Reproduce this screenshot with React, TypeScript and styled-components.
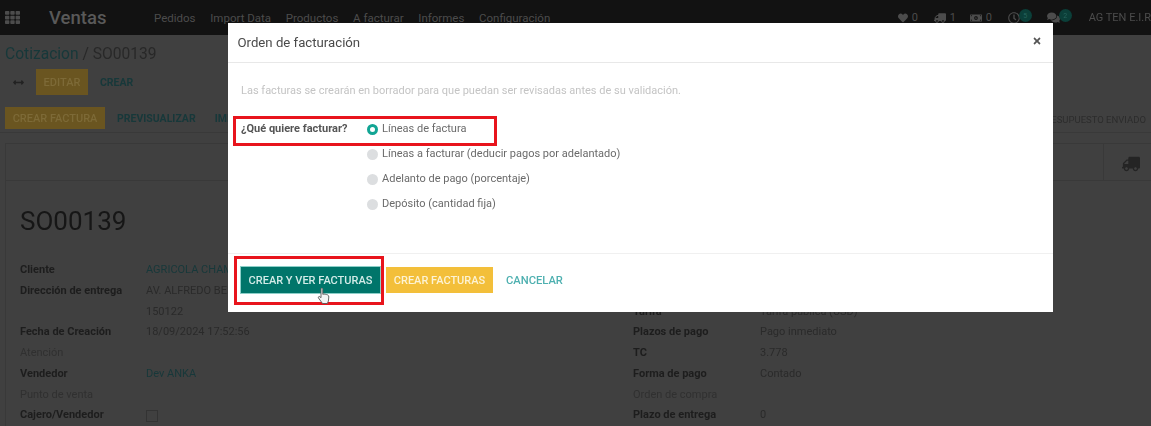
import React from "react";
import styled, { createGlobalStyle } from "styled-components";
import { FaTh, FaTruck, FaHeart, FaMoneyBillAlt, FaRegClock, FaComments, FaTimes, FaArrowsAltH } from "react-icons/fa";

const Global = createGlobalStyle`
  html, body { margin: 0; padding: 0; background: #404040; }
  body { font-family: Roboto, "Liberation Sans", sans-serif; }
`;

const Page = styled.div`
  position: relative;
  width: 1151px;
  height: 426px;
  overflow: hidden;
  background: #404040;
  color: #1f1f1f;
  font-size: 11px;
`;
const Backdrop = styled.div`
  display: flex;
  flex-direction: column;
  height: 100%;
  filter: blur(0.5px);
`;
const Navbar = styled.header`
  flex: none;
  height: 35px;
  background: #121212;
  display: flex;
  align-items: center;
  padding-left: 5px;
  color: #4c4c4c;
`;
const Brand = styled.span`
  margin-left: 29px;
  width: 105px;
  font-size: 18.5px;
  font-weight: 500;
  color: #595959;
`;
const NavMenu = styled.nav`
  display: flex;
  gap: 14.7px;
  font-size: 11.5px;
`;
const Systray = styled.div`
  margin-left: auto;
  display: flex;
  align-items: center;
  font-size: 11px;
`;
const TrayItem = styled.span<{ $w: number }>`
  display: flex;
  align-items: center;
  gap: 4px;
  width: ${(p) => p.$w}px;
  white-space: nowrap;
`;
const Dot = styled.span`
  width: 13px;
  height: 13px;
  margin-left: -5px;
  margin-top: -4px;
  border-radius: 50%;
  background: #0b3f39;
  color: #27635c;
  font-size: 7px;
  display: flex;
  align-items: center;
  justify-content: center;
`;
const Breadcrumb = styled.div`
  padding: 9px 0 0 5px;
  height: 26px;
  font-size: 15.6px;
  line-height: 21px;
  color: #282828;
  & > b { font-weight: 400; color: #17383a; }
`;
const ActionRow = styled.div`
  display: flex;
  align-items: center;
  height: 26px;
  color: #222;
`;
const Arrow = styled.span`
  width: 36px;
  padding-left: 13px;
  box-sizing: border-box;
  display: flex;
`;
const YellowBtn = styled.span<{ $w: number; $h: number }>`
  width: ${(p) => p.$w}px;
  height: ${(p) => p.$h}px;
  background: #6a5520;
  color: #7d6a37;
  font-size: 11px;
  font-weight: 500;
  display: flex;
  align-items: center;
  justify-content: center;
  flex: none;
`;
const GhostBtn = styled.span<{ $ml: number; $mt?: number }>`
  margin-left: ${(p) => p.$ml}px;
  margin-top: ${(p) => p.$mt ?? 0}px;
  color: #17383a;
  font-size: 10.5px;
  font-weight: 700;
  white-space: nowrap;
`;
const StatusBar = styled.div`
  flex: none;
  margin-top: 12px;
  height: 25px;
  padding-left: 5px;
  display: flex;
  align-items: flex-start;
  border-bottom: 1px solid #393939;
`;
const StageName = styled.span`
  margin-left: auto;
  margin-right: 5px;
  margin-top: 7px;
  color: #2c2c2c;
  font-size: 9.5px;
  white-space: nowrap;
`;
const Sheet = styled.section`
  margin: 10px 0 0 5px;
  flex: 1;
  border-top: 1px solid #393939;
  border-left: 1px solid #393939;
  display: flex;
  flex-direction: column;
`;
const ButtonBox = styled.div`
  flex: none;
  height: 36px;
  display: flex;
  justify-content: flex-end;
  border-bottom: 1px solid #393939;
`;
const ButtonCell = styled.div`
  width: 48px;
  box-sizing: border-box;
  padding: 3px 0 0 6px;
  border-left: 1px solid #393939;
  display: flex;
  align-items: center;
  justify-content: center;
  color: #242424;
`;
const Title = styled.h1`
  margin: 24px 0 0 14px;
  height: 38px;
  font-size: 26px;
  line-height: 32px;
  font-weight: 400;
  color: #161616;
`;
const Columns = styled.div`
  display: flex;
  margin: 17px 0 0 14px;
`;
const Column = styled.div<{ $w: number }>`
  width: ${(p) => p.$w}px;
  display: flex;
  flex-direction: column;
  flex: none;
`;
const Field = styled.div`
  height: 20.75px;
  line-height: 20.75px;
  display: flex;
  white-space: nowrap;
`;
const Label = styled.span<{ $w: number; $muted?: boolean }>`
  width: ${(p) => p.$w}px;
  flex: none;
  font-weight: ${(p) => (p.$muted ? 400 : 700)};
  color: ${(p) => (p.$muted ? "#303030" : "#1d1d1d")};
`;
const Value = styled.span<{ $link?: boolean }>`
  color: ${(p) => (p.$link ? "#17383a" : "#2a2a2a")};
`;
const Check = styled.span`
  width: 10px;
  height: 10px;
  margin-top: 5px;
  border: 1px solid #333;
`;

const Modal = styled.div`
  position: absolute;
  left: 228px;
  top: 23px;
  width: 825px;
  height: 289px;
  background: #fff;
  display: flex;
  flex-direction: column;
  filter: blur(0.3px);
`;
const ModalHeader = styled.div`
  flex: none;
  height: 40px;
  box-sizing: border-box;
  border-bottom: 1px solid #e8e8e8;
  padding: 0 11px 0 9.5px;
  display: flex;
  align-items: center;
  justify-content: space-between;
`;
const ModalTitle = styled.span`
  font-size: 13.2px;
  color: #4a4a4a;
`;
const Close = styled.span`
  display: flex;
  color: #555;
  margin-top: -3px;
`;
const ModalBody = styled.div`
  flex: 1;
  padding: 21px 13px 0;
  font-size: 11px;
  color: #6a6a6a;
`;
const Note = styled.p`
  margin: 0 0 24.4px;
  line-height: 14px;
  color: #c4c4c4;
`;
const FormRow = styled.div`
  display: flex;
`;
const FormLabel = styled.span`
  width: 126px;
  flex: none;
  font-weight: 700;
  color: #555;
  line-height: 13px;
`;
const RadioGroup = styled.div`
  display: flex;
  flex-direction: column;
`;
const RadioRow = styled.label`
  height: 25px;
  display: flex;
  align-items: flex-start;
  gap: 4px;
  line-height: 14px;
`;
const Radio = styled.span<{ $on?: boolean }>`
  width: 11px;
  height: 11px;
  margin-top: 2px;
  border-radius: 50%;
  box-sizing: border-box;
  background: ${(p) => (p.$on ? "#fff" : "#dcdee0")};
  border: ${(p) => (p.$on ? "3px solid #12a594" : "none")};
`;
const ModalFooter = styled.div`
  flex: none;
  height: 59px;
  box-sizing: border-box;
  border-top: 1px solid #f0f0f0;
  padding: 13px 0 0 13px;
  display: flex;
  align-items: flex-start;
`;
const PrimaryBtn = styled.span`
  width: 139px;
  height: 26px;
  background: #00756a;
  color: #d3ece8;
  box-shadow: 0 0 0 1px #8ccfc8;
  font-size: 11px;
  font-weight: 500;
  display: flex;
  align-items: center;
  justify-content: center;
`;
const SecondaryBtn = styled.span`
  margin-left: 6px;
  width: 107px;
  height: 26px;
  background: #f3bf3a;
  color: #fdf3d4;
  font-size: 11px;
  font-weight: 500;
  display: flex;
  align-items: center;
  justify-content: center;
`;
const CancelBtn = styled.span`
  margin-left: 13px;
  height: 26px;
  line-height: 27px;
  color: #4eb0b0;
  font-size: 11.2px;
  font-weight: 500;
`;
const Highlight = styled.div<{ $l: number; $t: number; $w: number; $h: number }>`
  position: absolute;
  left: ${(p) => p.$l}px;
  top: ${(p) => p.$t}px;
  width: ${(p) => p.$w}px;
  height: ${(p) => p.$h}px;
  box-sizing: border-box;
  border: 3.5px solid #e8141c;
`;
const Pointer = styled.svg`
  position: absolute;
  left: 317px;
  top: 287px;
`;

const leftFields: [string, string, boolean?, boolean?][] = [
  ["Cliente", "AGRICOLA CHAMPAGNE", true],
  ["Dirección de entrega", "AV. ALFREDO BENAVIDES"],
  ["", "150122"],
  ["Fecha de Creación", "18/09/2024 17:52:56"],
  ["Atención", "", false, true],
  ["Vendedor", "Dev ANKA", true],
  ["Punto de venta", "", false, true],
];
const rightFields: [string, string, boolean?][] = [
  ["Tarifa", "Tarifa pública (USD)"],
  ["Plazos de pago", "Pago inmediato"],
  ["TC", "3.778"],
  ["Forma de pago", "Contado"],
  ["Orden de compra", "", true],
  ["Plazo de entrega", "0"],
];
const options = [
  "Líneas de factura",
  "Líneas a facturar (deducir pagos por adelantado)",
  "Adelanto de pago (porcentaje)",
  "Depósito (cantidad fija)",
];

export default function App() {
  return (
    <Page>
      <Global />
      <Backdrop>
        <Navbar>
          <FaTh size={15} />
          <Brand>Ventas</Brand>
          <NavMenu>
            <span>Pedidos</span>
            <span>Import Data</span>
            <span>Productos</span>
            <span>A facturar</span>
            <span>Informes</span>
            <span>Configuración</span>
          </NavMenu>
          <Systray>
            <TrayItem $w={36}><FaHeart size={10} />0</TrayItem>
            <TrayItem $w={36}><FaTruck size={12} style={{ transform: "scaleX(-1)" }} />1</TrayItem>
            <TrayItem $w={38}><FaMoneyBillAlt size={12} />0</TrayItem>
            <TrayItem $w={39}><FaRegClock size={12} /><Dot>5</Dot></TrayItem>
            <TrayItem $w={42}><FaComments size={13} /><Dot>2</Dot></TrayItem>
            <span>AG TEN E.I.R</span>
          </Systray>
        </Navbar>
        <Breadcrumb><b>Cotizacion</b> / SO00139</Breadcrumb>
        <ActionRow>
          <Arrow><FaArrowsAltH size={11} /></Arrow>
          <YellowBtn $w={52} $h={26}>EDITAR</YellowBtn>
          <GhostBtn $ml={12}>CREAR</GhostBtn>
        </ActionRow>
        <StatusBar>
          <YellowBtn $w={100} $h={22}>CREAR FACTURA</YellowBtn>
          <GhostBtn $ml={12} $mt={5}>PREVISUALIZAR</GhostBtn>
          <GhostBtn $ml={19} $mt={5}>IMPRIMIR</GhostBtn>
          <StageName>PRESUPUESTO ENVIADO</StageName>
        </StatusBar>
        <Sheet>
          <ButtonBox>
            <ButtonCell><FaTruck size={18} style={{ transform: "scaleX(-1)" }} /></ButtonCell>
          </ButtonBox>
          <Title>SO00139</Title>
          <Columns>
            <Column $w={613}>
              {leftFields.map(([l, v, link, muted]) => (
                <Field key={l + v}>
                  <Label $w={126} $muted={muted}>{l}</Label>
                  <Value $link={link}>{v}</Value>
                </Field>
              ))}
              <Field>
                <Label $w={126}>Cajero/Vendedor</Label>
                <Check />
              </Field>
            </Column>
            <Column $w={400}>
              <Field />
              <Field />
              {rightFields.map(([l, v, muted]) => (
                <Field key={l}>
                  <Label $w={127} $muted={muted}>{l}</Label>
                  <Value>{v}</Value>
                </Field>
              ))}
            </Column>
          </Columns>
        </Sheet>
      </Backdrop>
      <Modal>
        <ModalHeader>
          <ModalTitle>Orden de facturación</ModalTitle>
          <Close><FaTimes size={10} /></Close>
        </ModalHeader>
        <ModalBody>
          <Note>Las facturas se crearán en borrador para que puedan ser revisadas antes de su validación.</Note>
          <FormRow>
            <FormLabel>¿Qué quiere facturar?</FormLabel>
            <RadioGroup>
              {options.map((o, i) => (
                <RadioRow key={o}>
                  <Radio $on={i === 0} />
                  {o}
                </RadioRow>
              ))}
            </RadioGroup>
          </FormRow>
        </ModalBody>
        <ModalFooter>
          <PrimaryBtn>CREAR Y VER FACTURAS</PrimaryBtn>
          <SecondaryBtn>CREAR FACTURAS</SecondaryBtn>
          <CancelBtn>CANCELAR</CancelBtn>
        </ModalFooter>
      </Modal>
      <Highlight $l={233} $t={116} $w={264} $h={30} />
      <Highlight $l={234} $t={256} $w={150} $h={49} />
      <Pointer width="14" height="18" viewBox="0 0 14 18">
        <path d="M4 1.5c.8-.8 1.8-.3 1.8.8v5l1.2-.3 1.2.2 1.2.3 1.4.5c.8.4 1 1 1 2l-.4 4-1 2.5H5.5L1.5 11c-.6-.9.4-2 1.4-1.3l1.1 1V2z" fill="#f4f4f4" stroke="#555" strokeWidth="0.9" />
      </Pointer>
    </Page>
  );
}
